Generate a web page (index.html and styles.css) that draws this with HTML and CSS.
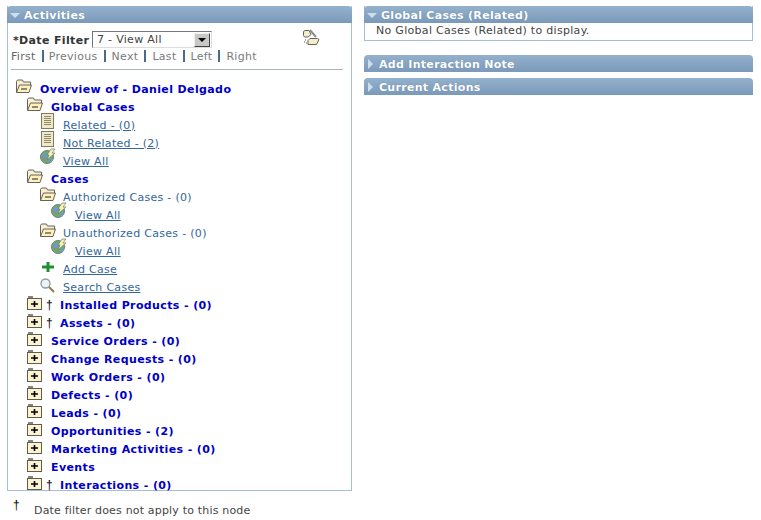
FILE: index.html
```html
<!DOCTYPE html>
<html lang="en">
<head>
<meta charset="utf-8">
<title>Activities</title>
<link rel="stylesheet" href="styles.css">
</head>
<body>
<svg class="defs" width="0" height="0" aria-hidden="true">
  <symbol id="open" viewBox="0 0 16 15">
    <path d="M0.500 13.500V2.500L1.500 1H6.500L7.500 3H14.500V6" fill="#f8f0d0" stroke="#66635a"/>
    <path d="M0.500 13.500L3.500 6H15.500L13 13.500Z" fill="#fdf0bd" stroke="#66635a"/>
    <path d="M5 10H11" stroke="#222" stroke-width="1"/>
  </symbol>
  <symbol id="closed" viewBox="0 0 15 15">
    <path d="M1 1H6V3H1Z" fill="#85857c"/>
    <rect x="0.500" y="3.500" width="14" height="11" fill="#fcf3cf" stroke="#5f5c52"/>
    <path d="M4 9H11M7.500 6V12" stroke="#000" stroke-width="1.600"/>
  </symbol>
  <symbol id="doc" viewBox="0 0 13 16">
    <rect x="0.500" y="0.500" width="12" height="15" fill="#f1e8c4" stroke="#7d7a66"/>
    <path d="M3 3.500H10M3 5.500H10M3 7.500H10M3 9.500H10M3 11.500H10" stroke="#8d8a74"/>
  </symbol>
  <symbol id="globe" viewBox="0 0 16 16">
    <circle cx="7" cy="9" r="6.500" fill="#6cab6a" stroke="#6f7c80"/>
    <path d="M2 7L6 5L8 9L4 13ZM9 12L13 10L11 15Z" fill="#6a9ad4"/>
    <path d="M2 11L5 9L6 13Z" fill="#9a8d60"/>
    <path d="M7 7L11 1H15L12 5H15L7 12L9 7Z" fill="#f7f2bd" stroke="#77775f" stroke-width="0.700"/>
  </symbol>
  <symbol id="plus" viewBox="0 0 12 10">
    <path d="M6 0V10M0 5H12" stroke="#1f8f2f" stroke-width="3"/>
  </symbol>
  <symbol id="search" viewBox="0 0 15 15">
    <circle cx="5.500" cy="5.500" r="4.500" fill="#eef3f8" stroke="#8b98a6" stroke-width="1.300"/>
    <path d="M9 9L14 14" stroke="#8d7a4a" stroke-width="2"/>
  </symbol>
  <symbol id="tools" viewBox="0 0 18 17">
    <path d="M1.500 6.500V2.500L3 1.500H7L9 5.500L6 8H2.500Z" fill="#f4edc9" stroke="#66645a"/>
    <path d="M6 11.500L8 9.500H15.500L17 10.500L14.500 15.500H6Z" fill="#f4edc9" stroke="#66645a"/>
    <path d="M8 1L14 8" stroke="#8b8f94" stroke-width="2"/>
    <path d="M3 11H4M2 13H3M4 14H5" stroke="#55554e"/>
  </symbol>
</svg>
<main class="page">
  <div class="left">
    <section class="panel activities">
      <h2 class="bar"><span class="tri-down"></span>Activities</h2>
      <div class="filter-row">
        <label class="filter-label">*Date Filter</label>
        <div class="select"><span class="select-text">7 - View All</span><span class="select-btn"><span class="select-arrow"></span></span></div>
        <svg class="tools"><use href="#tools"/></svg>
      </div>
      <div class="nav">
        <span>First</span><i></i><span>Previous</span><i></i><span>Next</span><i></i><span>Last</span><i></i><span>Left</span><i></i><span>Right</span>
      </div>
      <hr class="rule">
      <ul class="tree">
        <li class="row l0"><svg class="ic folder"><use href="#open"/></svg><b class="node">Overview of - Daniel Delgado</b></li>
        <li class="row l1"><svg class="ic folder"><use href="#open"/></svg><b class="node">Global Cases</b></li>
        <li class="row l2"><svg class="ic doc"><use href="#doc"/></svg><a href="#">Related - (0)</a></li>
        <li class="row l2"><svg class="ic doc"><use href="#doc"/></svg><a href="#">Not Related - (2)</a></li>
        <li class="row l2"><svg class="ic globe"><use href="#globe"/></svg><a href="#">View All</a></li>
        <li class="row l1"><svg class="ic folder"><use href="#open"/></svg><b class="node">Cases</b></li>
        <li class="row l2"><svg class="ic folder"><use href="#open"/></svg><span class="sub">Authorized Cases - (0)</span></li>
        <li class="row l3"><svg class="ic globe"><use href="#globe"/></svg><a href="#">View All</a></li>
        <li class="row l2"><svg class="ic folder"><use href="#open"/></svg><span class="sub">Unauthorized Cases - (0)</span></li>
        <li class="row l3"><svg class="ic globe"><use href="#globe"/></svg><a href="#">View All</a></li>
        <li class="row l2"><svg class="ic plus"><use href="#plus"/></svg><a href="#">Add Case</a></li>
        <li class="row l2"><svg class="ic search"><use href="#search"/></svg><a href="#">Search Cases</a></li>
        <li class="row l1 dag"><svg class="ic closed"><use href="#closed"/></svg><span class="dagger">†</span><b class="node">Installed Products - (0)</b></li>
        <li class="row l1 dag"><svg class="ic closed"><use href="#closed"/></svg><span class="dagger">†</span><b class="node">Assets - (0)</b></li>
        <li class="row l1"><svg class="ic closed"><use href="#closed"/></svg><b class="node">Service Orders - (0)</b></li>
        <li class="row l1"><svg class="ic closed"><use href="#closed"/></svg><b class="node">Change Requests - (0)</b></li>
        <li class="row l1"><svg class="ic closed"><use href="#closed"/></svg><b class="node">Work Orders - (0)</b></li>
        <li class="row l1"><svg class="ic closed"><use href="#closed"/></svg><b class="node">Defects - (0)</b></li>
        <li class="row l1"><svg class="ic closed"><use href="#closed"/></svg><b class="node">Leads - (0)</b></li>
        <li class="row l1"><svg class="ic closed"><use href="#closed"/></svg><b class="node">Opportunities - (2)</b></li>
        <li class="row l1"><svg class="ic closed"><use href="#closed"/></svg><b class="node">Marketing Activities - (0)</b></li>
        <li class="row l1"><svg class="ic closed"><use href="#closed"/></svg><b class="node">Events</b></li>
        <li class="row l1 dag"><svg class="ic closed"><use href="#closed"/></svg><span class="dagger">†</span><b class="node">Interactions - (0)</b></li>
      </ul>
    </section>
    <div class="footnote"><span class="foot-dagger">†</span><span class="foot-text">Date filter does not apply to this node</span></div>
  </div>
  <div class="right">
    <section class="panel related">
      <h2 class="bar"><span class="tri-down"></span>Global Cases (Related)</h2>
      <p class="empty">No Global Cases (Related) to display.</p>
    </section>
    <h2 class="bar closed-bar note"><span class="tri-right"></span>Add Interaction Note</h2>
    <h2 class="bar closed-bar"><span class="tri-right"></span>Current Actions</h2>
  </div>
</main>
</body>
</html>
```
FILE: styles.css
```css
* { box-sizing: border-box; }
html, body { margin: 0; padding: 0; background: #fff; }
body {
  width: 761px;
  height: 520px;
  overflow: hidden;
  font-family: "DejaVu Sans", Verdana, sans-serif;
  font-size: 11px;
  letter-spacing: 0.3px;
  color: #333;
}
.defs { position: absolute; }
.page { display: flex; align-items: flex-start; padding: 6px 0 0 7px; gap: 12px; }
.left { width: 345px; }
.right { width: 389px; }
.panel { border: 1px solid #a5bdd6; border-top: 0; background: #fff; }
.bar {
  display: flex;
  align-items: center;
  height: 17px;
  margin: 0;
  padding-top: 1px;
  border-radius: 4px 4px 0 0;
  background: linear-gradient(#94b1cc, #7b9aba);
  color: #fff;
  font-size: 11px;
  font-weight: bold;
  letter-spacing: 0.3px;
  text-shadow: 0 0 1px #5d7c9b;
}
.panel .bar { margin: 0 -1px; }
.tri-down {
  width: 0;
  height: 0;
  margin: 0 4px 0 3px;
  border-left: 5px solid transparent;
  border-right: 5px solid transparent;
  border-top: 5px solid #cfdeec;
}
.tri-right {
  width: 0;
  height: 0;
  margin: -1px 6px 0 4px;
  border-top: 5px solid transparent;
  border-bottom: 5px solid transparent;
  border-left: 5px solid #cfdeec;
}
.filter-row { position: relative; display: flex; align-items: flex-start; height: 17px; margin-top: 8px; padding-left: 5px; }
.filter-label { width: 79px; padding-top: 3px; font-weight: bold; color: #333; white-space: nowrap; letter-spacing: 0.35px; }
.select {
  display: flex;
  align-items: center;
  width: 120px;
  height: 17px;
  border: 1px solid #777;
  border-right-color: #ddd;
  border-bottom-color: #ddd;
  background: #fff;
  color: #444;
}
.select-text { flex: 1; padding-left: 4px; }
.select-btn {
  display: flex;
  align-items: center;
  justify-content: center;
  width: 16px;
  height: 14px;
  margin-right: 1px;
  background: #c8c8c4;
  border: 1px solid;
  border-color: #eee #444 #444 #eee;
}
.select-arrow { width: 0; height: 0; border-left: 4px solid transparent; border-right: 4px solid transparent; border-top: 4px solid #000; }
.tools { position: absolute; left: 294px; top: -2px; width: 18px; height: 17px; }
.nav { display: flex; align-items: center; height: 14px; margin-top: 1px; padding-left: 3px; color: #7a7a7a; }
.nav span:first-child { color: #666; }
.nav i { width: 2px; height: 12px; margin: 0 6px; background: #4a6a8e; }
.nav i:first-of-type { margin-right: 5px; }
.rule { height: 1px; margin: 6px 8px 0 3px; border: 0; background: #a9b3bd; }
.tree { list-style: none; margin: 10px 0 0; padding: 0; }
.row { position: relative; display: flex; align-items: center; height: 18px; white-space: nowrap; }
.ic { position: absolute; top: 0; }
.folder { width: 16px; height: 15px; top: -1px; }
.closed { width: 15px; height: 15px; top: -1px; }
.doc { width: 13px; height: 16px; top: -3px; }
.globe { width: 16px; height: 16px; top: -4px; }
.plus { width: 12px; height: 10px; top: 2px; }
.search { width: 15px; height: 15px; top: 0; }
.l0 { padding-left: 32px; }
.l0 .ic { left: 8px; }
.l1 { padding-left: 43px; }
.l1 .ic { left: 19px; }
.l2 { padding-left: 55px; }
.l2 .ic { left: 32px; }
.l2 .doc { left: 33px; }
.l2 .plus { left: 34px; }
.l3 { padding-left: 67px; }
.l3 .ic { left: 43px; }
.dag { padding-left: 38px; }
.dagger { width: 14px; color: #000; font-family: "Liberation Sans", sans-serif; font-size: 12px; }
.node { color: #0000c8; font-weight: bold; letter-spacing: 0.38px; }
.sub { color: #336699; }
a { color: #336699; text-decoration: underline; }
.activities { height: 485px; }
.footnote { display: flex; position: relative; height: 20px; margin-top: 7px; padding-left: 6px; color: #444; letter-spacing: 0.18px; }
.foot-dagger { width: 21px; color: #000; font-family: "Liberation Sans", sans-serif; font-size: 12px; }
.foot-text { margin-top: 6px; }
.empty { height: 17px; margin: 0; padding-left: 11px; line-height: 16px; color: #444; }
.closed-bar { margin-top: 6px; }
.note { margin-top: 14px; }
```
